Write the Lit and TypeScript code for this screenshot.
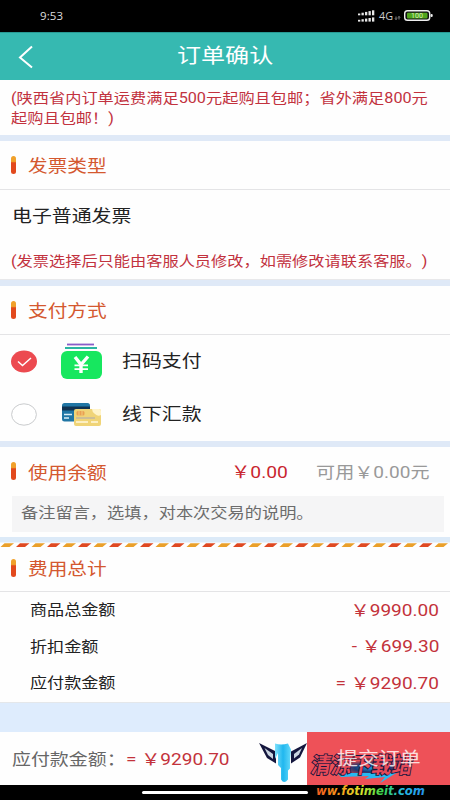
import { LitElement, html, css, svg } from "lit";
import { customElement } from "lit/decorators.js";

@customElement("app-root")
class AppRoot extends LitElement {
  static styles = css`
    :host { display: block; width: 450px; height: 800px; overflow: hidden; background: #fefefe; font-family: Roboto, "Noto Sans CJK SC", sans-serif; color: #222; text-spacing-trim: space-all; }
    .page { display: flex; flex-direction: column; width: 450px; height: 800px; position: relative; }
    .page > * { flex: none; box-sizing: border-box; }
    svg { display: block; }
    .t { display: inline-block; white-space: nowrap; transform: scaleX(1.163); transform-origin: 0 50%; }
    .r { transform-origin: 100% 50%; }
    .status { height: 32px; background: #000; display: flex; }
    .nav { height: 48px; background: #36b9b1; display: flex; align-items: center; color: #fff; padding: 0 0 0 17px; border-top: 1px solid #279a94; }
    .nav .t { font-size: 20.7px; line-height: 44px; margin-left: 142.5px; padding-bottom: 2px; }
    .note { color: #c2323e; font-size: 13.95px; line-height: 20px; }
    .n1 { height: 55px; padding: 7.5px 0 0 11px; display: flex; flex-direction: column; align-items: flex-start; }
    .gap { background: #dfe9f7; height: 6px; }
    .gap.wide { background: #deecfd; height: 30px; border-top: 1px solid #e4e7ea; }
    .head { height: 49px; border-bottom: 1px solid #e4e4e6; display: flex; align-items: center; padding: 0 0 1px 11px; color: #d4582f; font-size: 16.9px; }
    .head.low { height: 44px; padding-bottom: 4px; }
    .bar { width: 5px; height: 18px; border-radius: 2.5px; background: linear-gradient(#f0a12b 0 30%, #e2491d 38%); margin-right: 12.4px; flex: none; }
    .invoice { height: 90px; padding: 13px 0 0 12px; display: flex; flex-direction: column; align-items: flex-start; border-bottom: 1px solid #e8e8ea; }
    .item { font-size: 17.1px; line-height: 27px; }
    .invoice .note { margin-top: 20.5px; margin-left: -1px; line-height: 20px; }
    .opt { height: 53px; display: flex; align-items: center; padding-left: 11px; }
    .opt .pic { margin-left: 22px; margin-right: 18px; }
    .head.balance { height: 49px; border: 0; }
    .bal { color: #c9252f; font-size: 16.6px; margin-left: auto; }
    .avail { color: #999; font-size: 16.4px; margin-left: 45px; margin-right: 20px; }
    .remark { margin: 0 6px 0 12px; height: 36px; background: #f5f5f6; color: #6c6c6c; font-size: 14.8px; line-height: 35px; padding-left: 9px; }
    .sum { display: flex; justify-content: space-between; padding: 0 11px 3px 30.4px; height: 36.6px; align-items: center; font-size: 14.7px; }
    .sum .m, .pay .m { color: #c3323b; font-size: 16.4px; }
    .foot { height: 53px; display: flex; align-items: center; }
    .pay { flex: 1; display: flex; align-items: center; padding-left: 12px; color: #666; font-size: 16.3px; }
    .pay .m { margin-left: 16px; }
    .btn { width: 143px; height: 53px; background: #ee5158; color: #fff; box-sizing: border-box; padding-left: 30px; font-size: 18px; line-height: 54px; }
    .btn .t { position: relative; z-index: 2; opacity: .8; }
    .home { height: 15px; background: #000; padding: 6px 0 0 142px; }
    .pill { width: 166px; height: 3px; border-radius: 2px; background: #fff; }
    .mark { position: absolute; z-index: 1; left: 255px; top: 735px; }
  `;
  head(t: string, low = false) {
    return html`<div class="head ${low ? "low" : ""}"><i class="bar"></i><span class="t">${t}</span></div>`;
  }
  render() {
    return html`<div class="page">
      <div class="status"><svg width="450" height="32">
        <text x="40" y="20" font-size="11.5" fill="#ddd" textLength="23" font-family="Open Sans">9:53</text>
        <g fill="#e8e8e8">
          ${[0, 1, 2, 3, 4].map((i) => svg`<rect x=${358 + i * 3.5} y=${13.5 - i * 0.8} width="2.3" height=${1.8 + i * 0.8}/><rect x=${358 + i * 3.5} y=${19.8 - i * 0.6} width="2.3" height=${1.8 + i * 0.6}/>`)}
        </g>
        <text x="379" y="20" font-size="11" fill="#ccc" textLength="14" lengthAdjust="spacingAndGlyphs" font-family="Open Sans">4G</text>
        <path d="M396 16.5v3m-1-1l1 1 1-1M399 19.500v-3m-1 1l1-1 1 1" stroke="#aaa" stroke-width=".8" fill="none"/>
        <rect x="404.700" y="10.700" width="25" height="9.600" rx="2.800" fill="#111" stroke="#eee" stroke-width="1.400"/>
        <rect x="407" y="12.700" width="20.500" height="5.700" rx="1" fill="#4fa51c"/>
        <rect x="430.500" y="14" width="2.200" height="3" rx="1" fill="#eee"/>
        <text x="411" y="18" font-size="7" fill="#d8f0b8" textLength="12" lengthAdjust="spacingAndGlyphs">100</text>
      </svg></div>
      <div class="nav"><svg width="17" height="24"><path d="M15 1.500L3 12.500 15 22.500" fill="none" stroke="#fff" stroke-width="2"/></svg><span class="t">订单确认</span></div>
      <div class="n1 note"><span class="t">(陕西省内订单运费满足500元起购且包邮；省外满足800元</span><span class="t">起购且包邮！)</span></div>
      <div class="gap"></div>
      ${this.head("发票类型")}
      <div class="invoice"><span class="t item">电子普通发票</span><span class="t note">(发票选择后只能由客服人员修改，如需修改请联系客服。)</span></div>
      <div class="gap"></div>
      ${this.head("支付方式")}
      <div class="opt"><svg width="26" height="23"><ellipse cx="13" cy="11.500" rx="13" ry="11" fill="#ec4a50"/><path d="M7 11.500l4.500 4L20 8" fill="none" stroke="#fff" stroke-width="1.500"/></svg>
        <svg class="pic" width="45" height="38"><path d="M8 1.500h27" stroke="#8a5cc8" stroke-width="1.800"/><path d="M6 5h32" stroke="#2bb5a2" stroke-width="2"/><rect x="2" y="8" width="41" height="28" rx="6" fill="#17e75f"/><path d="M16 14l6 7.500 7-8" stroke="#fff" stroke-width="3.400" fill="none"/><path d="M22 21v9" stroke="#fff" stroke-width="3.400"/><path d="M15.500 22.300h13.500M15.500 26.100h13.500" stroke="#fff" stroke-width="1.800"/></svg>
        <span class="t item">扫码支付</span></div>
      <div class="opt"><svg width="26" height="23"><ellipse cx="13" cy="11.500" rx="12.400" ry="10.700" fill="#fff" stroke="#c9cbcd"/></svg>
        <svg class="pic" width="45" height="38"><rect x="3" y="7" width="28" height="18.500" rx="2.500" fill="#2076a5"/><path d="M3 10.500h28v4H3z" fill="#103251"/><path d="M5 18.500h8M5 22h5" stroke="#d9eef6" stroke-width="1.500"/><rect x="15" y="13" width="27" height="17" rx="2" fill="#f0d477"/><path d="M33 13h7q2 0 2 2v4q-3 2-6-1-3-2-3-5z" fill="#fff4ca"/><rect x="17.500" y="15" width="8" height="4.500" rx="1.500" fill="#e9a152"/><path d="M20 15v4.500m3-4.500v4.500" stroke="#f4d58c" stroke-width=".8"/><path d="M17 22h19" stroke="#bdb5a4" stroke-width="1.400"/><path d="M17 26h12m3 0h7" stroke="#fff8dc" stroke-width="1.500"/></svg>
        <span class="t item">线下汇款</span></div>
      <div class="gap"></div>
      <div class="head balance"><i class="bar"></i><span class="t">使用余额</span><span class="t r bal">￥0.00</span><span class="t r avail">可用￥0.00元</span></div>
      <div class="remark"><span class="t">备注留言，选填，对本次交易的说明。</span></div>
      <svg width="450" height="16"><path d="M0 5h450v5.500H0z" fill="#dceaf8"/>
        ${Array.from({ length: 30 }, (_, i) => svg`<path d=${`M${4.5 + i * 15.5} 11.200h9.500l-4.500 3.800h-9z`} fill=${i % 2 ? "#df4922" : "#eaa02b"}/>`)}</svg>
      ${this.head("费用总计", true)}
      <div class="sum"><span class="t">商品总金额</span><span class="t r m">￥9990.00</span></div>
      <div class="sum"><span class="t">折扣金额</span><span class="t r m">- ￥699.30</span></div>
      <div class="sum"><span class="t">应付款金额</span><span class="t r m">= ￥9290.70</span></div>
      <div class="gap wide"></div>
      <div class="foot"><div class="pay"><span class="t">应付款金额：</span><span class="t m">= ￥9290.70</span></div><div class="btn"><span class="t">提交订单</span></div></div>
      <div class="home"><div class="pill"></div></div>
      <svg class="mark" width="185" height="65">
        <defs>
          <linearGradient id="u" x1="0" x2="1"><stop offset="0" stop-color="#f2551c"/><stop offset=".25" stop-color="#f6a61c"/><stop offset=".42" stop-color="#d8e42c"/><stop offset=".6" stop-color="#3bd64a"/><stop offset=".8" stop-color="#25b9e8"/><stop offset="1" stop-color="#2590ee"/></linearGradient>
          <linearGradient id="b" x1="0" x2="1"><stop offset="0" stop-color="#7ee0fb"/><stop offset=".5" stop-color="#20b7ef"/><stop offset="1" stop-color="#65d9fa"/></linearGradient>
          <radialGradient id="n"><stop offset="0" stop-color="#1f9be0"/><stop offset=".5" stop-color="#153a78"/><stop offset="1" stop-color="#14204f" stop-opacity=".1"/></radialGradient>
        </defs>
        <path d="M4 8l17 8.500v12L12 23z" fill="#14163d"/><path d="M9.500 13l8.500 6v5l-5-4z" fill="#c9d4e0"/>
        <path d="M52 8l-16 8.500v12l9-6z" fill="#14163d"/><path d="M47 13l-8 6v4.500l5-4z" fill="#c9d4e0"/>
        <path d="M20 8.500q6 2 13 0l3 6-1 10v9l-2 2v9q-4 5-7 0V33l-3-3V18l-3 6z" fill="url(#b)"/>
        <ellipse cx="117" cy="33" rx="34" ry="8" fill="url(#n)"/>
        <path d="M82 38h55l14-6-26 16 5-6-20 2 4-3-28 1z" fill="#28b9f1"/>
        <text transform="translate(55 37.500) skewX(-10)" textLength="101" lengthAdjust="spacingAndGlyphs" font-size="22" font-weight="700" font-family="Noto Sans CJK SC" fill="#e54a58" stroke="#14163d" stroke-width="1.800" paint-order="stroke">清源下载站</text>
        <text x="61" y="60" textLength="109" lengthAdjust="spacingAndGlyphs" font-size="12" font-weight="700" font-style="italic" font-family="DejaVu Sans" fill="url(#u)">ww.fotimeit.com</text>
      </svg>
    </div>`;
  }
}
